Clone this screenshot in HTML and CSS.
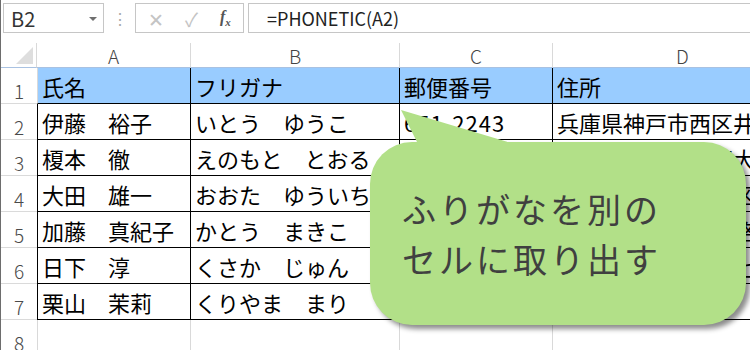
FILE: index.html
```html
<!DOCTYPE html>
<html lang="ja">
<head>
    <meta charset="UTF-8">
    <title>ふりがなを別のセルに取り出す</title>
    <link rel="stylesheet" href="styles.css">
</head>
<body>
    <div class="formula-bar">
        <div class="name-box">
            <span>B2</span>
            <span class="caret"></span>
        </div>
        <div class="grip">⋮</div>
        <div class="fx-box">
            <span class="cancel">✕</span>
            <span class="enter">✓</span>
            <span class="fx">f<sub>x</sub></span>
        </div>
        <div class="formula">=PHONETIC(A2)</div>
    </div>

    <div class="sheet">
        <div class="corner"><span class="tri"></span></div>
        <div class="col-head">A</div>
        <div class="col-head">B</div>
        <div class="col-head">C</div>
        <div class="col-head">D</div>

        <div class="row-head">1</div>
        <div class="cell head first">氏名</div>
        <div class="cell head">フリガナ</div>
        <div class="cell head">郵便番号</div>
        <div class="cell head">住所</div>

        <div class="row-head">2</div>
        <div class="cell first">伊藤　裕子</div>
        <div class="cell">いとう　ゆうこ</div>
        <div class="cell num">651-2243</div>
        <div class="cell">兵庫県神戸市西区井吹台東町</div>

        <div class="row-head">3</div>
        <div class="cell first">榎本　徹</div>
        <div class="cell">えのもと　とおる</div>
        <div class="cell num">531-0076</div>
        <div class="cell">大阪府大阪市北区大淀中</div>

        <div class="row-head">4</div>
        <div class="cell first">大田　雄一</div>
        <div class="cell">おおた　ゆういち</div>
        <div class="cell num">604-8006</div>
        <div class="cell">京都府京都市中京区河原町</div>

        <div class="row-head">5</div>
        <div class="cell first">加藤　真紀子</div>
        <div class="cell">かとう　まきこ</div>
        <div class="cell num">630-8213</div>
        <div class="cell">奈良県奈良市登大路町</div>

        <div class="row-head">6</div>
        <div class="cell first">日下　淳</div>
        <div class="cell">くさか　じゅん</div>
        <div class="cell num">640-8156</div>
        <div class="cell">和歌山県和歌山市七番丁</div>

        <div class="row-head">7</div>
        <div class="cell first">栗山　茉莉</div>
        <div class="cell">くりやま　まり</div>
        <div class="cell num">520-0044</div>
        <div class="cell">滋賀県大津市京町</div>

        <div class="row-head">8</div>
        <div class="cell empty first"></div>
        <div class="cell empty"></div>
        <div class="cell empty"></div>
        <div class="cell empty"></div>
    </div>

    <div class="callout">ふりがなを別の<br>セルに取り出す</div>
</body>
</html>
```

FILE: styles.css
```css
body {
    margin: 0;
    width: 750px;
    height: 350px;
    overflow: hidden;
    position: relative;
    background: #fff;
    border-left: 1px solid #6d6d6d;
    box-sizing: border-box;
    font-family: "Noto Sans CJK JP", "Noto Sans", sans-serif;
    color: #000;
}

/* Formula bar */
.formula-bar {
    display: flex;
    align-items: flex-start;
    height: 43px;
    padding: 3px 0 0 2px;
    box-sizing: border-box;
}

.name-box {
    display: flex;
    align-items: center;
    justify-content: space-between;
    width: 101px;
    height: 30px;
    box-sizing: border-box;
    border: 1px solid #c6c6c6;
    padding: 0 6px 0 7px;
    font-size: 20px;
    color: #333;
}

.caret {
    width: 0;
    height: 0;
    border-left: 4px solid transparent;
    border-right: 4px solid transparent;
    border-top: 4px solid #6f6f6f;
    margin-top: 2px;
}

.grip {
    width: 31px;
    height: 30px;
    line-height: 30px;
    text-align: center;
    color: #a8a8a8;
    font-size: 16px;
}

.fx-box {
    display: flex;
    align-items: center;
    width: 109px;
    height: 30px;
    box-sizing: border-box;
    border: 1px solid #c6c6c6;
    padding-left: 12px;
    color: #c4c4c4;
    font-size: 19px;
}

.cancel { width: 37px; }
.enter { width: 35px; }

.fx {
    font-family: "Liberation Serif", serif;
    font-style: italic;
    font-weight: bold;
    font-size: 16px;
    color: #555;
}

.fx sub { font-size: 11px; }

.formula {
    flex: 1;
    height: 30px;
    line-height: 28px;
    margin-left: 4px;
    box-sizing: border-box;
    border: 1px solid #c6c6c6;
    border-right: none;
    padding-left: 18px;
    font-size: 18px;
    color: #222;
}

/* Sheet grid */
.sheet {
    display: grid;
    grid-template-columns: 36px 154px 209px 153px 260px;
    grid-template-rows: 25px repeat(8, 36px);
    overflow: hidden;
}

.corner {
    position: relative;
    border-right: 1px solid #d9d9d9;
    border-bottom: 1px solid #a9c2e2;
}

.tri {
    position: absolute;
    right: 3px;
    bottom: 3px;
    width: 17px;
    height: 17px;
    background: #dedede;
    clip-path: polygon(100% 0, 100% 100%, 0 100%);
}

.col-head {
    display: flex;
    align-items: center;
    justify-content: center;
    padding-top: 2px;
    border-right: 1px solid #d9d9d9;
    border-bottom: 1px solid #a9c2e2;
    font-size: 19px;
    font-weight: 300;
    line-height: 22px;
    color: #444;
}

.row-head {
    display: flex;
    align-items: flex-end;
    justify-content: center;
    padding-bottom: 1px;
    border-bottom: 1px solid #dadada;
    font-size: 19px;
    font-weight: 300;
    line-height: 22px;
    color: #4a4a4a;
}

.cell {
    display: flex;
    align-items: center;
    padding-left: 4px;
    white-space: nowrap;
    overflow: hidden;
    border-right: 1px solid #000;
    border-bottom: 1px solid #000;
    font-size: 22px;
}

.cell.first { border-left: 1px solid #000; }

.cell.head {
    background: #99ccff;
}

.cell.head.first { border-left-color: #d9d9d9; }

.cell.num { letter-spacing: 1px; }

.cell.empty {
    border-color: #d9d9d9;
    border-bottom: none;
}

/* Callout */
.callout {
    position: absolute;
    left: 369px;
    top: 142px;
    width: 376px;
    height: 183px;
    box-sizing: border-box;
    padding: 42px 0 0 32px;
    border-radius: 42px;
    background: #b2e088;
    box-shadow: 4px 4px 5px rgba(0, 0, 0, 0.45);
    color: #404040;
    font-size: 34px;
    line-height: 50px;
    letter-spacing: 3px;
}

.callout::before {
    content: "";
    position: absolute;
    left: 31px;
    top: -32px;
    width: 106px;
    height: 36px;
    background: #b2e088;
    clip-path: polygon(0 0, 18px 100%, 100% 100%, 100% 88%);
}
```
